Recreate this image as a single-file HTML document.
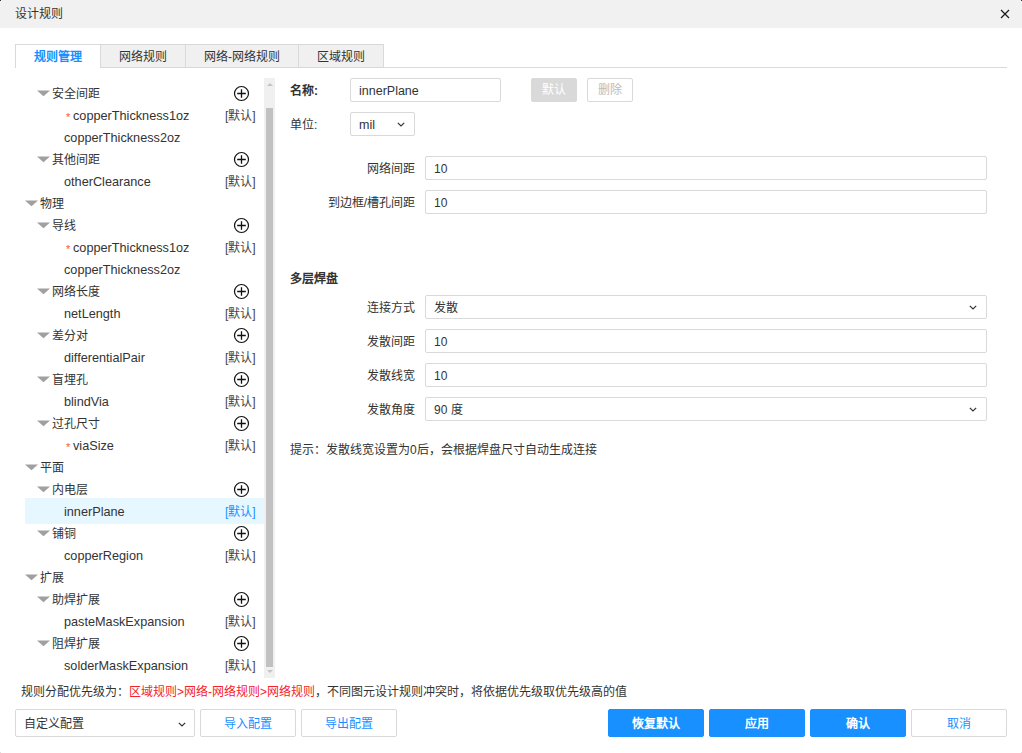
<!DOCTYPE html>
<html lang="zh-CN"><head><meta charset="utf-8"><style>
*{box-sizing:border-box;margin:0;padding:0}
html,body{width:1022px;height:753px;overflow:hidden;background:#fff;font-family:"Liberation Sans",sans-serif;color:#333}
.a{position:absolute;white-space:nowrap}
#title{position:absolute;left:0;top:0;width:1022px;height:28px;background:#f1f1f1}
#title .t{position:absolute;left:15px;top:6px;font-size:12px;line-height:16px;color:#333}
.tab{position:absolute;top:44px;height:24px;border:1px solid #d9d9d9;border-bottom:none;background:#f0f0f0;font-size:12px;line-height:24px;text-align:center;color:#333}
.tab.act{background:#fff;color:#1890ff;font-weight:bold}
#tabline{position:absolute;left:100px;top:67px;width:907px;height:1px;background:#d9d9d9}
.tt{position:absolute;white-space:nowrap;font-size:12px;line-height:22px;color:#333}
.lat{font-size:12.7px}
.tri{position:absolute;width:0;height:0;border-left:6px solid transparent;border-right:6px solid transparent;border-top:7px solid #a0a0a0}
.star{position:absolute;color:#ff4d4f;font-size:11px;line-height:22px}
.plus{position:absolute}
.df{position:absolute;font-size:12px;line-height:22px;color:#444}
.dfh{color:#1890ff}
.hl{position:absolute;left:25px;width:239px;height:26px;background:#e6f7ff}
#sb{position:absolute;left:264px;top:78px;width:11px;height:600px;background:#f0f0f0}
#thumb{position:absolute;left:266px;top:108px;width:7px;height:559px;background:#c1c1c1}
.arr{position:absolute;width:0;height:0;border-left:4px solid transparent;border-right:4px solid transparent}
.lbl{position:absolute;white-space:nowrap;font-size:12px;line-height:27px;color:#333}
.r{text-align:right}
.inp{position:absolute;height:24px;border:1px solid #d9d9d9;border-radius:2px;background:#fff;font-size:12px;line-height:24.5px;padding-left:8px;color:#333;white-space:nowrap}
.chev{position:absolute}
.btn{position:absolute;height:28px;border:1px solid #d9d9d9;border-radius:2px;background:#fff;font-size:12px;line-height:29px;text-align:center;color:#1890ff}
.btn.p{background:#1890ff;border-color:#1890ff;color:#fff;font-weight:bold}
.red{color:#f5222d}
</style></head><body>
<div id="title"><div class="t">设计规则</div>
<svg class="a" style="left:1000px;top:9px" width="10" height="10" viewBox="0 0 10 10"><path d="M1 1L9 9M9 1L1 9" stroke="#1a1a1a" stroke-width="1.2"/></svg>
</div>
<div class="tab act" style="left:15px;width:86px">规则管理</div>
<div class="tab" style="left:100px;width:86px">网络规则</div>
<div class="tab" style="left:185px;width:114px">网络-网络规则</div>
<div class="tab" style="left:298px;width:86px">区域规则</div>
<div id="tabline"></div>

<svg class="a" style="left:36.5px;top:89.5px" width="13" height="7" viewBox="0 0 13 7"><path d="M0 0.5H13L6.5 6.3Z" fill="#a0a0a0"/></svg>
<div class="tt" style="left:52px;top:83px">安全间距</div>
<svg class="plus" style="left:233px;top:85px" width="17" height="17" viewBox="0 0 17 17"><circle cx="8.5" cy="8.5" r="7" fill="none" stroke="#111" stroke-width="1.2"/><path d="M4.2 8.5H12.8M8.5 4.2V12.8" stroke="#111" stroke-width="1.3"/></svg>
<div class="star" style="left:66px;top:106px">*</div>
<div class="tt lat" style="left:73px;top:105px">copperThickness1oz</div>
<div class="df" style="left:225px;top:105px">[默认]</div>
<div class="tt lat" style="left:64px;top:127px">copperThickness2oz</div>
<svg class="a" style="left:36.5px;top:155.5px" width="13" height="7" viewBox="0 0 13 7"><path d="M0 0.5H13L6.5 6.3Z" fill="#a0a0a0"/></svg>
<div class="tt" style="left:52px;top:149px">其他间距</div>
<svg class="plus" style="left:233px;top:151px" width="17" height="17" viewBox="0 0 17 17"><circle cx="8.5" cy="8.5" r="7" fill="none" stroke="#111" stroke-width="1.2"/><path d="M4.2 8.5H12.8M8.5 4.2V12.8" stroke="#111" stroke-width="1.3"/></svg>
<div class="tt lat" style="left:64px;top:171px">otherClearance</div>
<div class="df" style="left:225px;top:171px">[默认]</div>
<svg class="a" style="left:24.5px;top:199.5px" width="13" height="7" viewBox="0 0 13 7"><path d="M0 0.5H13L6.5 6.3Z" fill="#a0a0a0"/></svg>
<div class="tt" style="left:40px;top:193px">物理</div>
<svg class="a" style="left:36.5px;top:221.5px" width="13" height="7" viewBox="0 0 13 7"><path d="M0 0.5H13L6.5 6.3Z" fill="#a0a0a0"/></svg>
<div class="tt" style="left:52px;top:215px">导线</div>
<svg class="plus" style="left:233px;top:217px" width="17" height="17" viewBox="0 0 17 17"><circle cx="8.5" cy="8.5" r="7" fill="none" stroke="#111" stroke-width="1.2"/><path d="M4.2 8.5H12.8M8.5 4.2V12.8" stroke="#111" stroke-width="1.3"/></svg>
<div class="star" style="left:66px;top:238px">*</div>
<div class="tt lat" style="left:73px;top:237px">copperThickness1oz</div>
<div class="df" style="left:225px;top:237px">[默认]</div>
<div class="tt lat" style="left:64px;top:259px">copperThickness2oz</div>
<svg class="a" style="left:36.5px;top:287.5px" width="13" height="7" viewBox="0 0 13 7"><path d="M0 0.5H13L6.5 6.3Z" fill="#a0a0a0"/></svg>
<div class="tt" style="left:52px;top:281px">网络长度</div>
<svg class="plus" style="left:233px;top:283px" width="17" height="17" viewBox="0 0 17 17"><circle cx="8.5" cy="8.5" r="7" fill="none" stroke="#111" stroke-width="1.2"/><path d="M4.2 8.5H12.8M8.5 4.2V12.8" stroke="#111" stroke-width="1.3"/></svg>
<div class="tt lat" style="left:64px;top:303px">netLength</div>
<div class="df" style="left:225px;top:303px">[默认]</div>
<svg class="a" style="left:36.5px;top:331.5px" width="13" height="7" viewBox="0 0 13 7"><path d="M0 0.5H13L6.5 6.3Z" fill="#a0a0a0"/></svg>
<div class="tt" style="left:52px;top:325px">差分对</div>
<svg class="plus" style="left:233px;top:327px" width="17" height="17" viewBox="0 0 17 17"><circle cx="8.5" cy="8.5" r="7" fill="none" stroke="#111" stroke-width="1.2"/><path d="M4.2 8.5H12.8M8.5 4.2V12.8" stroke="#111" stroke-width="1.3"/></svg>
<div class="tt lat" style="left:64px;top:347px">differentialPair</div>
<div class="df" style="left:225px;top:347px">[默认]</div>
<svg class="a" style="left:36.5px;top:375.5px" width="13" height="7" viewBox="0 0 13 7"><path d="M0 0.5H13L6.5 6.3Z" fill="#a0a0a0"/></svg>
<div class="tt" style="left:52px;top:369px">盲埋孔</div>
<svg class="plus" style="left:233px;top:371px" width="17" height="17" viewBox="0 0 17 17"><circle cx="8.5" cy="8.5" r="7" fill="none" stroke="#111" stroke-width="1.2"/><path d="M4.2 8.5H12.8M8.5 4.2V12.8" stroke="#111" stroke-width="1.3"/></svg>
<div class="tt lat" style="left:64px;top:391px">blindVia</div>
<div class="df" style="left:225px;top:391px">[默认]</div>
<svg class="a" style="left:36.5px;top:419.5px" width="13" height="7" viewBox="0 0 13 7"><path d="M0 0.5H13L6.5 6.3Z" fill="#a0a0a0"/></svg>
<div class="tt" style="left:52px;top:413px">过孔尺寸</div>
<svg class="plus" style="left:233px;top:415px" width="17" height="17" viewBox="0 0 17 17"><circle cx="8.5" cy="8.5" r="7" fill="none" stroke="#111" stroke-width="1.2"/><path d="M4.2 8.5H12.8M8.5 4.2V12.8" stroke="#111" stroke-width="1.3"/></svg>
<div class="star" style="left:66px;top:436px">*</div>
<div class="tt lat" style="left:73px;top:435px">viaSize</div>
<div class="df" style="left:225px;top:435px">[默认]</div>
<svg class="a" style="left:24.5px;top:463.5px" width="13" height="7" viewBox="0 0 13 7"><path d="M0 0.5H13L6.5 6.3Z" fill="#a0a0a0"/></svg>
<div class="tt" style="left:40px;top:457px">平面</div>
<svg class="a" style="left:36.5px;top:485.5px" width="13" height="7" viewBox="0 0 13 7"><path d="M0 0.5H13L6.5 6.3Z" fill="#a0a0a0"/></svg>
<div class="tt" style="left:52px;top:479px">内电层</div>
<svg class="plus" style="left:233px;top:481px" width="17" height="17" viewBox="0 0 17 17"><circle cx="8.5" cy="8.5" r="7" fill="none" stroke="#111" stroke-width="1.2"/><path d="M4.2 8.5H12.8M8.5 4.2V12.8" stroke="#111" stroke-width="1.3"/></svg>
<div class="hl" style="top:498px"></div>
<div class="tt lat" style="left:64px;top:501px">innerPlane</div>
<div class="df dfh" style="left:225px;top:501px">[默认]</div>
<svg class="a" style="left:36.5px;top:529.5px" width="13" height="7" viewBox="0 0 13 7"><path d="M0 0.5H13L6.5 6.3Z" fill="#a0a0a0"/></svg>
<div class="tt" style="left:52px;top:523px">铺铜</div>
<svg class="plus" style="left:233px;top:525px" width="17" height="17" viewBox="0 0 17 17"><circle cx="8.5" cy="8.5" r="7" fill="none" stroke="#111" stroke-width="1.2"/><path d="M4.2 8.5H12.8M8.5 4.2V12.8" stroke="#111" stroke-width="1.3"/></svg>
<div class="tt lat" style="left:64px;top:545px">copperRegion</div>
<div class="df" style="left:225px;top:545px">[默认]</div>
<svg class="a" style="left:24.5px;top:573.5px" width="13" height="7" viewBox="0 0 13 7"><path d="M0 0.5H13L6.5 6.3Z" fill="#a0a0a0"/></svg>
<div class="tt" style="left:40px;top:567px">扩展</div>
<svg class="a" style="left:36.5px;top:595.5px" width="13" height="7" viewBox="0 0 13 7"><path d="M0 0.5H13L6.5 6.3Z" fill="#a0a0a0"/></svg>
<div class="tt" style="left:52px;top:589px">助焊扩展</div>
<svg class="plus" style="left:233px;top:591px" width="17" height="17" viewBox="0 0 17 17"><circle cx="8.5" cy="8.5" r="7" fill="none" stroke="#111" stroke-width="1.2"/><path d="M4.2 8.5H12.8M8.5 4.2V12.8" stroke="#111" stroke-width="1.3"/></svg>
<div class="tt lat" style="left:64px;top:611px">pasteMaskExpansion</div>
<div class="df" style="left:225px;top:611px">[默认]</div>
<svg class="a" style="left:36.5px;top:639.5px" width="13" height="7" viewBox="0 0 13 7"><path d="M0 0.5H13L6.5 6.3Z" fill="#a0a0a0"/></svg>
<div class="tt" style="left:52px;top:633px">阻焊扩展</div>
<svg class="plus" style="left:233px;top:635px" width="17" height="17" viewBox="0 0 17 17"><circle cx="8.5" cy="8.5" r="7" fill="none" stroke="#111" stroke-width="1.2"/><path d="M4.2 8.5H12.8M8.5 4.2V12.8" stroke="#111" stroke-width="1.3"/></svg>
<div class="tt lat" style="left:64px;top:655px">solderMaskExpansion</div>
<div class="df" style="left:225px;top:655px">[默认]</div>
<div id="sb"></div>
<div id="thumb"></div>
<div class="arr" style="left:266.5px;top:83px;border-left-width:3px;border-right-width:3px;border-bottom:3px solid #c4c4c4"></div>
<div class="arr" style="left:266.5px;top:670px;border-left-width:3px;border-right-width:3px;border-top:3px solid #c4c4c4"></div>

<div class="lbl" style="left:290px;top:78px;font-weight:bold">名称:</div>
<div class="inp" style="left:350px;top:78px;width:151px"><span style="font-size:12.5px">innerPlane</span></div>
<div class="btn" style="left:531px;top:78px;width:46px;height:24px;line-height:22px;background:#d9d9d9;border-color:#d9d9d9;color:#fff">默认</div>
<div class="btn" style="left:587px;top:78px;width:46px;height:24px;line-height:22px;color:#bbb">删除</div>
<div class="lbl" style="left:290px;top:112px">单位:</div>
<div class="inp" style="left:350px;top:112px;width:65px"><span style="font-size:12.5px">mil</span></div>
<div class="lbl r" style="left:300px;top:156px;width:115px">网络间距</div>
<div class="inp" style="left:425px;top:156px;width:562px">10</div>
<div class="lbl r" style="left:300px;top:190px;width:115px">到边框/槽孔间距</div>
<div class="inp" style="left:425px;top:190px;width:562px">10</div>

<div class="lbl" style="left:290px;top:265.5px;font-weight:bold">多层焊盘</div>
<div class="lbl r" style="left:300px;top:295px;width:115px">连接方式</div>
<div class="inp" style="left:425px;top:295px;width:562px">发散</div>
<div class="lbl r" style="left:300px;top:329px;width:115px">发散间距</div>
<div class="inp" style="left:425px;top:329px;width:562px">10</div>
<div class="lbl r" style="left:300px;top:363px;width:115px">发散线宽</div>
<div class="inp" style="left:425px;top:363px;width:562px">10</div>
<div class="lbl r" style="left:300px;top:397px;width:115px">发散角度</div>
<div class="inp" style="left:425px;top:397px;width:562px">90 度</div>
<div class="lbl" style="left:290px;top:437px">提示：发散线宽设置为0后，会根据焊盘尺寸自动生成连接</div>

<div class="lbl" style="left:21px;top:678.5px">规则分配优先级为：<span class="red">区域规则&gt;网络-网络规则&gt;网络规则</span>，不同图元设计规则冲突时，将依据优先级取优先级高的值</div>

<div class="inp" style="left:15px;top:709px;width:180px;height:28px;line-height:28px;padding-left:8px">自定义配置</div>
<div class="btn" style="left:200px;top:709px;width:96px">导入配置</div>
<div class="btn" style="left:301px;top:709px;width:96px">导出配置</div>
<div class="btn p" style="left:608px;top:709px;width:96px">恢复默认</div>
<div class="btn p" style="left:709px;top:709px;width:96px">应用</div>
<div class="btn p" style="left:810px;top:709px;width:96px">确认</div>
<div class="btn" style="left:911px;top:709px;width:96px">取消</div>

<svg class="chev" style="left:397px;top:122px" width="8" height="5" viewBox="0 0 8 5"><path d="M0.8 0.8L4 4L7.2 0.8" fill="none" stroke="#333" stroke-width="1.2"/></svg>
<svg class="chev" style="left:969px;top:305px" width="8" height="5" viewBox="0 0 8 5"><path d="M0.8 0.8L4 4L7.2 0.8" fill="none" stroke="#333" stroke-width="1.2"/></svg>
<svg class="chev" style="left:969px;top:407px" width="8" height="5" viewBox="0 0 8 5"><path d="M0.8 0.8L4 4L7.2 0.8" fill="none" stroke="#333" stroke-width="1.2"/></svg>
<svg class="chev" style="left:177.5px;top:722px" width="8" height="5" viewBox="0 0 8 5"><path d="M0.8 0.8L4 4L7.2 0.8" fill="none" stroke="#333" stroke-width="1.2"/></svg>
<div class="a" style="left:0;top:0;width:1px;height:1px;background:#333"></div>
<div class="a" style="left:1021px;top:0;width:1px;height:1px;background:#333"></div>
<div class="a" style="left:0;top:752px;width:1px;height:1px;background:#ddd"></div>
<div class="a" style="left:1021px;top:752px;width:1px;height:1px;background:#ddd"></div>
</body></html>
